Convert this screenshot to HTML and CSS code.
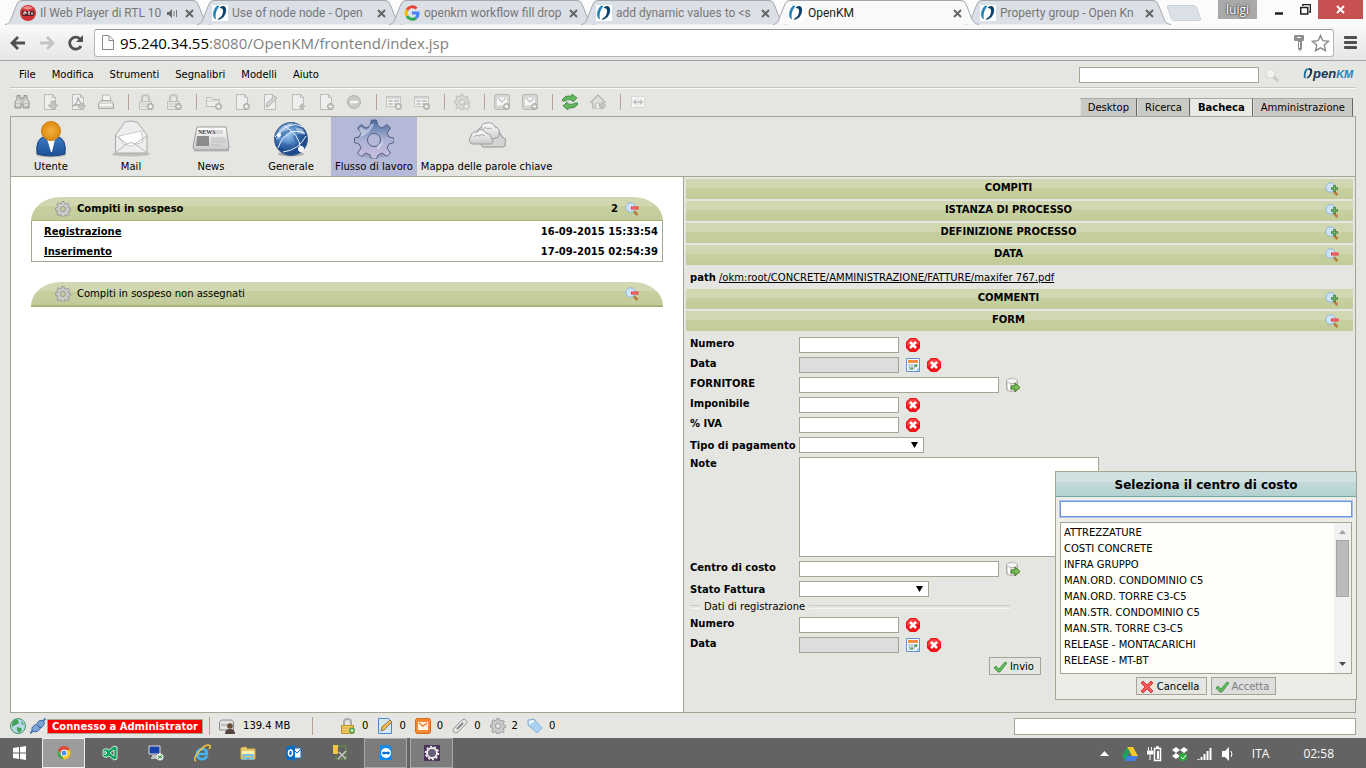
FILE: index.html
```html
<!DOCTYPE html>
<html lang="it">
<head>
<meta charset="utf-8">
<title>OpenKM</title>
<link rel="stylesheet" href="styles.css">
</head>
<body>
<svg class="defs" aria-hidden="true">
  <defs>
    <linearGradient id="g-person" x2="0" y2="1"><stop offset="0" stop-color="#3d7cc4"/><stop offset="1" stop-color="#1d4f94"/></linearGradient>
    <radialGradient id="g-head"><stop offset="0" stop-color="#f3b040"/><stop offset="1" stop-color="#dd8b12"/></radialGradient>
    <linearGradient id="g-grey" x2="0" y2="1"><stop offset="0" stop-color="#fff"/><stop offset="1" stop-color="#c9c9c9"/></linearGradient>
    <radialGradient id="g-world" cx=".4" cy=".35"><stop offset="0" stop-color="#a9cdf0"/><stop offset=".6" stop-color="#4f86c6"/><stop offset="1" stop-color="#1e4a8c"/></radialGradient>
    <linearGradient id="g-gear" x2="0" y2="1"><stop offset="0" stop-color="#4b6aa0"/><stop offset=".5" stop-color="#a9b2d4"/><stop offset="1" stop-color="#cdbfe0"/></linearGradient>
    <symbol id="tab" viewBox="0 0 206 25" preserveAspectRatio="none"><path d="M0 24.500C4 24 5 22 6 19L12 4Q13 .5 17 .5H188Q192 .5 193 4L199 19C200 22 202 24 206 24.500" stroke="#a4a8ad"/></symbol>
    <symbol id="okm" viewBox="0 0 16 16"><path d="M6 .5C2 2 0 9 2 13l2 1.500C3 10 4 5 7.500 1z" fill="#1d86b8"/><path d="M9 1.500c5-2 6 3 4.500 7-1.500 4-4 6-8 6.500L7 13c2.500-1 3.500-3 4-6 .3-2 0-4-3.500-4z" fill="#0d426b"/></symbol>
    <symbol id="rtl" viewBox="0 0 16 16"><circle cx="8" cy="8" r="8" fill="#cf3237"/><path d="M2 3q6-4 11 0L8 5z" fill="#ed898a"/><rect x="2" y="6" width="12" height="5" rx="1" fill="#542527"/><path d="M4 10V7h2v2M9 7v3M8 7h2M12 7v3" stroke="#fff" fill="none"/></symbol>
    <symbol id="google" viewBox="0 0 16 16"><g fill="none" stroke-width="3"><path d="M12.500 3.500A6 6 0 0 0 3 5" stroke="#ea4335"/><path d="M3 5a6 6 0 0 0 0 6" stroke="#fbbc05"/><path d="M3 11a6 6 0 0 0 9 2" stroke="#34a853"/><path d="M12 13a6 6 0 0 0 2-5H8" stroke="#4285f4"/></g></symbol>
    <symbol id="close" viewBox="0 0 9 9"><path d="M1 1l7 7M8 1L1 8" stroke="#666" stroke-width="2"/></symbol>
    <symbol id="gear" viewBox="0 0 16 16"><path d="M7 .5h2l.5 2 1.500.7 2-1 1.300 1.500-1 1.800.5 1.500 2 .5v2l-2 .5-.6 1.500 1.100 2-1.500 1.300-1.800-1-1.500.6-.5 1.600H7l-.5-1.600-1.500-.6-2 1L1.700 13l1-1.900L2.100 9.500.3 9V7l1.900-.5L2.800 5l-1-2 1.500-1.300 1.800 1L6.500 2.200zM8 5.500a2.500 2.500 0 1 0 0 5 2.500 2.500 0 1 0 0-5z" fill="#cacaca" stroke="#8c8c8c" stroke-width=".8" fill-rule="evenodd"/></symbol>
    <symbol id="bigear" viewBox="0 0 40 40"><ellipse cx="20" cy="35" rx="15" ry="4" fill="#888cab" opacity=".5"/><path d="M17.500 1h5l1.500 6 4 2 5-3.500 3.500 3.500-3.500 5 2 4 5 1v4.500l-5 1.500-2 4 3.500 5-3.500 3.500-5-3.500-4 2-1.500 4h-5L16 36l-4-2-5 3.500L3.500 34 7 29l-2-4-4.500-1.500V19L5 18l2-4-3.500-5L7 5.500 12 9l4-2zM20 14.500a6.500 6.500 0 1 0 0 13 6.500 6.500 0 1 0 0-13z" fill="url(#g-gear)" stroke="#55607f" fill-rule="evenodd"/><path d="M6 18l1-3-2-5 2-2 5 3 3-2 2-4h3q-3 9-14 13zM29 18q1 9-6 13l1-5q5-2 5-8z" fill="#e4e9f5" opacity=".55"/></symbol>
    <symbol id="lens-plus" viewBox="0 0 14 14"><circle cx="5.500" cy="5.500" r="4.700" fill="#cfe3f8" stroke="#8fb4e0"/><path d="M9 9.500l3.500 3.500" stroke="#b97b3c" stroke-width="2.500"/><path d="M6 6.500h7M9.500 3v7" stroke="#3f853b" stroke-width="2.600"/><path d="M7 6.500h5M9.500 4v5" stroke="#76b26b"/></symbol>
    <symbol id="lens-minus" viewBox="0 0 14 14"><circle cx="5.500" cy="5.500" r="4.700" fill="#cfe3f8" stroke="#8fb4e0"/><path d="M9 9.500l3.500 3.500" stroke="#b97b3c" stroke-width="2.500"/><path d="M6 6h7.500" stroke="#e3343c" stroke-width="3"/><path d="M7 6h5.500" stroke="#ff8b86"/></symbol>
    <symbol id="delete" viewBox="0 0 14 14"><path d="M4 0h6l4 4v6l-4 4H4l-4-4V4z" fill="#f01218"/><path d="M4.500 1h5L13 4.500v2Q7 5 1 8V4.500z" fill="#ff6060" opacity=".6"/><path d="M4 4l6 6M10 4l-6 6" stroke="#fff" stroke-width="2.600"/></symbol>
    <symbol id="calendar" viewBox="0 0 14 14"><path d="M.5.500h13v13H.5z" fill="#fff" stroke="#5e91d0"/><path d="M2 2h10v3H2z" fill="#f38b47"/><path d="M2 7h10M2 9h8M2 11h6M3.500 6v6M6 6v6M8.500 6v5M11 6v3" stroke="#a9bfe0"/><path d="M8.500 6.500h2.500V9H8.500zM4.500 9.500h2.500v2H4.500z" fill="#50a24c"/><path d="M13 9v4H9z" fill="#bcd1ee"/></symbol>
    <symbol id="database" viewBox="0 0 14 14"><path d="M.5 3v8c0 3 11 3 11 0V3z" fill="#d9d9d9" stroke="#aaa"/><ellipse cx="6" cy="3" rx="5.500" ry="2.500" fill="#f7f7f7" stroke="#b4b4b4"/><path d="M2 5v7h2V6z" fill="#fff"/><path d="M5 8h4V5l5 4.500L9 14v-3H5z" fill="#7fbd5a" stroke="#36801d"/></symbol>
    <symbol id="check" viewBox="0 0 14 12"><path d="M1 7l2-2 3 3L12 1l2 1-7 9H5z" fill="#63bd60" stroke="#37883a" stroke-width=".8"/></symbol>
    <symbol id="cross" viewBox="0 0 14 14"><path d="M1 3l2-2 4 4 4-4 2 2-4 4 4 4-2 2-4-4-4 4-2-2 4-4z" fill="#fa5c5c" stroke="#d83b3f"/></symbol>
    <symbol id="t-find" viewBox="0 0 16 16"><path d="M3 1.500h3V4h4V1.500h3V5l2 3v6H9v-4H7v4H1V8l2-3z" fill="#c4c4c2" stroke="#969694"/><path d="M2 8h4M10 8h4M2 11h4M10 11h4M4 5v2M12 5v2" stroke="#eee"/></symbol>
    <symbol id="page" viewBox="0 0 16 16"><path d="M2.500.500h8l3 3v12h-11z" fill="#eeeeec" stroke="#bcbcba"/><path d="M10.500.500v3h3" fill="none" stroke="#bcbcba"/></symbol>
    <symbol id="t-down" viewBox="0 0 16 16"><use href="#page"/><path d="M9 7h4v4h3l-5 5-5-5h3z" fill="#c6c6c4" stroke="#aaaaa8" stroke-width=".7"/></symbol>
    <symbol id="t-pdf" viewBox="0 0 16 16"><use href="#page"/><path d="M3 12q5-3 5-9 1 6 6 8-6-1-11 1" fill="none" stroke="#aaa" stroke-width="1.200"/><path d="M10 9h3v3h3l-4.500 4L7 12h3z" fill="#c6c6c4" stroke="#aaaaa8" stroke-width=".5"/></symbol>
    <symbol id="t-print" viewBox="0 0 16 16"><path d="M4.500 7V1h6l2 2v4" fill="#f4f4f2" stroke="#b5b5b3"/><path d="M3 6.500h10l2.500 3v5H.5v-5z" fill="#d9d9d7" stroke="#a9a9a7"/><path d="M2 11h12" stroke="#f6f6f4" stroke-width="2"/></symbol>
    <symbol id="t-lock" viewBox="0 0 16 16"><path d="M4 8V4q0-3 3.500-3T11 4v4" fill="none" stroke="#c4c4c2" stroke-width="2"/><path d="M1.500 7.500h12v8h-12z" fill="#e4e4e2" stroke="#c0c0be"/><path d="M3 10h9M3 12.500h7" stroke="#ccccca"/></symbol>
    <symbol id="badge-plus" viewBox="0 0 16 16"><circle cx="12.500" cy="12.500" r="3" fill="#c9c9c7" stroke="#a5a5a3"/><path d="M11 12.500h3M12.500 11v3" stroke="#fff"/></symbol>
    <symbol id="badge-minus" viewBox="0 0 16 16"><circle cx="12.500" cy="12.500" r="3" fill="#c9c9c7" stroke="#a5a5a3"/><path d="M11 12.500h3" stroke="#fff"/></symbol>
    <symbol id="t-folder" viewBox="0 0 16 16"><path d="M.5 3.500h5l1 2h7v7H.5z" fill="#ececea" stroke="#bcbcba"/><path d="M1 7h12" stroke="#ccc"/></symbol>
    <symbol id="t-edit" viewBox="0 0 16 16"><use href="#page"/><path d="M4 13l1-4 8-7 2 2-8 8z" fill="#d1d1cf" stroke="#b4b4b2"/></symbol>
    <symbol id="t-up" viewBox="0 0 16 16"><use href="#page"/><path d="M12 9l4 4h-2v3h-4v-3H8z" fill="#bdbdbb"/></symbol>
    <symbol id="t-stop" viewBox="0 0 16 16"><circle cx="8" cy="8" r="6.500" fill="#c9c9c7" stroke="#b1b1af"/><path d="M4 8h8" stroke="#f5f5f3" stroke-width="2.500"/></symbol>
    <symbol id="t-form" viewBox="0 0 16 16"><path d="M.5 2.500h14v10H.5z" fill="#f1f1ef" stroke="#c4c4c2"/><path d="M1 4h13" stroke="#bbb"/><path d="M2.500 7h4M8 7h5M2.500 10h4M8 10h3" stroke="#bbb" stroke-width="1.500"/></symbol>
    <symbol id="t-mail" viewBox="0 0 16 16"><rect x=".5" y=".5" width="15" height="15" rx="2" fill="#d4d4d2" stroke="#b9b9b7"/><path d="M3 3.500h10v8H3z" fill="#f7f7f5"/><path d="M4 4l4 4 4-4" fill="none" stroke="#c4c4c2" stroke-width="1.500"/></symbol>
    <symbol id="t-refresh" viewBox="0 0 16 16"><path d="M0 6q3-5 8-4h2V0l5 4-4 4-1-2q-5-1-7 1H0z" fill="#66b763" stroke="#348a39" stroke-width=".8"/><path d="M16 10q-3 5-8 4H6v2l-5-4 4-4 1 2q5 1 7-1h3z" fill="#66b763" stroke="#348a39" stroke-width=".8"/></symbol>
    <symbol id="t-home" viewBox="0 0 16 16"><path d="M1 8l7-7 7 7-2 1v5H3V9z" fill="#dededc" stroke="#b0b0ae" stroke-width="1.200"/><path d="M6 14V9h4v5" fill="#f7f7f5" stroke="#bbb"/><path d="M9 10h3V8l4 3.500-4 3.500v-2H9z" fill="#c6c6c4" stroke="#aaa" stroke-width=".6"/></symbol>
    <symbol id="t-split" viewBox="0 0 16 16"><path d="M1.500 2.500h13v11h-13z" fill="#f5f5f3" stroke="#d8d8d6"/><path d="M2.500 8L6 5v2h4V5l3.500 3-3.500 3V9H6v2z" fill="#c2c2c0"/><path d="M8 3v10" stroke="#ddd"/></symbol>
    <symbol id="globe" viewBox="0 0 16 16"><circle cx="8" cy="8" r="7.500" fill="#b7d6ea" stroke="#40955b"/><path d="M3 3q4-3 5-1l1 3-3 2-3 1-1 2V6zM7 9l4 1 1 2-3 3-2-3zM11 3l3 3-2 1z" fill="#42a556"/></symbol>
  </defs>
</svg>

<header class="browser">
  <div class="strip">
    <div class="btab"><svg class="shape"><use href="#tab"/></svg><svg class="i16"><use href="#rtl"/></svg><span class="btitle">Il Web Player di RTL 10</span><svg class="speaker" viewBox="0 0 12 9"><path d="M0 3h2l3-3v9L2 6H0z" fill="#666"/><path d="M7 2v5M9.500 1v7" stroke="#777"/></svg><button class="x" aria-label="Chiudi scheda"><svg><use href="#close"/></svg></button></div>
    <div class="btab"><svg class="shape"><use href="#tab"/></svg><svg class="i16 white"><use href="#okm"/></svg><span class="btitle">Use of node node - Open</span><button class="x" aria-label="Chiudi scheda"><svg><use href="#close"/></svg></button></div>
    <div class="btab"><svg class="shape"><use href="#tab"/></svg><svg class="i16"><use href="#google"/></svg><span class="btitle">openkm workflow fill drop</span><button class="x" aria-label="Chiudi scheda"><svg><use href="#close"/></svg></button></div>
    <div class="btab"><svg class="shape"><use href="#tab"/></svg><svg class="i16 white"><use href="#okm"/></svg><span class="btitle">add dynamic values to &lt;s</span><button class="x" aria-label="Chiudi scheda"><svg><use href="#close"/></svg></button></div>
    <div class="btab current"><svg class="shape"><use href="#tab"/></svg><svg class="i16 white"><use href="#okm"/></svg><span class="btitle">OpenKM</span><button class="x" aria-label="Chiudi scheda"><svg><use href="#close"/></svg></button></div>
    <div class="btab"><svg class="shape"><use href="#tab"/></svg><svg class="i16 white"><use href="#okm"/></svg><span class="btitle">Property group - Open Kn</span><button class="x" aria-label="Chiudi scheda"><svg><use href="#close"/></svg></button></div>
    <button class="newtab" aria-label="Nuova scheda"></button>
    <div class="winctl">
      <span class="user">luigi</span>
      <button aria-label="Riduci"><svg width="10" height="12"><path d="M1 9.500h8" stroke="#222" stroke-width="2.500"/></svg></button>
      <button aria-label="Ripristina"><svg width="11" height="11"><path d="M3 2V.5h7.500V8H9M.75 3.500h7V10h-7z" fill="none" stroke="#222" stroke-width="1.500"/></svg></button>
      <button class="kill" aria-label="Chiudi"><svg width="9" height="9"><path d="M1 1l7 7M8 1L1 8" stroke="#fff" stroke-width="2"/></svg></button>
    </div>
  </div>
  <div class="nav">
    <button aria-label="Indietro"><svg width="16" height="14"><path d="M15 7H2M8 1L2 7l6 6" fill="none" stroke="#505050" stroke-width="2.800"/></svg></button>
    <button aria-label="Avanti"><svg width="16" height="14"><path d="M1 7h13M8 1l6 6-6 6" fill="none" stroke="#c4c4c4" stroke-width="2.800"/></svg></button>
    <button aria-label="Ricarica"><svg width="16" height="16"><path d="M13 11a6 6 0 1 1-1-7" fill="none" stroke="#505050" stroke-width="2.800"/><path d="M15 0v7H8z" fill="#505050"/></svg></button>
    <div class="omni">
      <svg width="12" height="15"><path d="M1 .5h6L11.500 5v9.500H.5V.5zM7 1v4.500h4" fill="#fff" stroke="#888"/></svg>
      <span class="url"><b>95.240.34.55</b>:8080/OpenKM/frontend/index.jsp</span>
      <svg width="11" height="16"><path d="M1 0h8q1 0 1 1v4q0 1-1 1H8v8l-2 2-2-2V6H1Q0 6 0 5V1z" fill="#8d8d8d"/><path d="M3 2.500h4M5.500 7v6" stroke="#fff"/></svg>
      <svg width="19" height="18"><path d="M9.500 1.500l2.400 5.200 5.600.6-4.200 3.800 1.200 5.600-5-2.900-5 2.900 1.200-5.600L1.500 7.300l5.600-.6z" fill="#fff" stroke="#8a8a8a" stroke-width="1.400"/></svg>
    </div>
    <button aria-label="Menu"><svg width="13" height="13"><path d="M1 1.500h11M1 6.500h11M1 11.500h11" stroke="#505050" stroke-width="2.800" stroke-linecap="round"/></svg></button>
  </div>
</header>

<main class="app">
  <div class="menubar">
    <nav><a href="#">File</a><a href="#">Modifica</a><a href="#">Strumenti</a><a href="#">Segnalibri</a><a href="#">Modelli</a><a href="#">Aiuto</a></nav>
    <input class="field quick" type="text" aria-label="Ricerca rapida">
    <svg class="glass" width="14" height="14"><path d="M8 8l5 5" stroke="#c7c7c5" stroke-width="3"/><circle cx="5.500" cy="5.500" r="4.500" fill="#f2f2f0" stroke="#d4d4d2"/></svg>
    <div class="logo"><svg width="10" height="13" viewBox="0 0 11 13"><path d="M4 1Q0 4 1 11l2 1Q2 5 6 1z" fill="#1c6f9d"/><path d="M6 1q5-1 4 4-1 5-5 7l-1-1q4-3 4-7 0-2-3-2z" fill="#0e3251"/></svg><span>pen<i>KM</i></span></div>
  </div>

  <div class="toolrow">
    <div class="tools">
      <div class="tgroup"><svg class="i16"><use href="#t-find"/></svg><svg class="i16"><use href="#t-down"/></svg><svg class="i16"><use href="#t-pdf"/></svg><svg class="i16"><use href="#t-print"/></svg></div>
      <div class="tgroup"><svg class="i16"><use href="#t-lock"/><use href="#badge-plus"/></svg><svg class="i16"><use href="#t-lock"/><use href="#badge-minus"/></svg></div>
      <div class="tgroup"><svg class="i16"><use href="#t-folder"/><use href="#badge-plus"/></svg><svg class="i16"><use href="#page"/><use href="#badge-plus"/></svg><svg class="i16"><use href="#t-edit"/></svg><svg class="i16"><use href="#t-up"/></svg><svg class="i16"><use href="#page"/><use href="#badge-minus"/></svg><svg class="i16"><use href="#t-stop"/></svg></div>
      <div class="tgroup"><svg class="i16"><use href="#t-form"/><use href="#badge-plus"/></svg><svg class="i16"><use href="#t-form"/><use href="#badge-minus"/></svg></div>
      <div class="tgroup"><svg class="i16 pale"><use href="#gear"/><use href="#badge-plus"/></svg></div>
      <div class="tgroup"><svg class="i16"><use href="#t-mail"/><use href="#badge-plus"/></svg><svg class="i16"><use href="#t-mail"/><use href="#badge-minus"/></svg></div>
      <div class="tgroup"><svg class="i16"><use href="#t-refresh"/></svg><svg class="i16"><use href="#t-home"/></svg></div>
      <div class="tgroup"><svg class="i16"><use href="#t-split"/></svg></div>
    </div>
    <nav class="views"><a href="#">Desktop</a><a href="#">Ricerca</a><a href="#" class="on">Bacheca</a><a href="#">Amministrazione</a></nav>
  </div>

  <div class="frame">
    <nav class="boards">
      <a href="#"><svg width="40" height="40" viewBox="0 0 40 40"><ellipse cx="20" cy="36" rx="15" ry="2.500" fill="#999" opacity=".5"/><path d="M6 35q-2-16 9-18h10q11 2 9 18-14 4-28 0z" fill="url(#g-person)" stroke="#18427c"/><path d="M16 20h8l-3 13h-1z" fill="#fff"/><circle cx="20" cy="12" r="9.500" fill="url(#g-head)" stroke="#c97d11"/></svg>Utente</a>
      <a href="#"><svg width="40" height="40" viewBox="0 0 40 40"><ellipse cx="20" cy="35" rx="19" ry="2.500" fill="#999" opacity=".5"/><path d="M4.500 34V16L14 3q6-2 12 0l10 13v18z" fill="#eee" stroke="#aaa"/><path d="M8 17l22-5 2 11-12 4-8-2z" fill="#fff" stroke="#ccc"/><path d="M5 33l11-8q4-3 8 0l11 8M5 17l11 8M36 17l-12 8" fill="none" stroke="#bbb"/></svg>Mail</a>
      <a href="#"><svg width="40" height="40" viewBox="0 0 40 40"><path d="M3 31h35" stroke="#999" stroke-width="3" opacity=".5"/><path d="M6 8h29l3 20q0 3-3 3H5q-3 0-3-3z" fill="url(#g-grey)" stroke="#999"/><text x="7" y="15" class="news">NEWS</text><path d="M24 12h8M24 14h8M20 19h14M20 21h15M20 23h15M20 26h10" stroke="#bbb"/><path d="M6 17h12v10H5z" fill="#8b8b8b"/></svg>News</a>
      <a href="#"><svg width="40" height="40" viewBox="0 0 40 40"><ellipse cx="20" cy="35" rx="13" ry="2.500" fill="#888" opacity=".6"/><circle cx="20" cy="20" r="16.500" fill="url(#g-world)" stroke="#41648f"/><path d="M8 11l7-6 5 2-2 7-6 4-5 1zM22 17l9-3 4 5-5 4-6-1zM12 24l9 2 1 6-6 2-6-5z" fill="#285894" opacity=".5"/><path d="M8 11q6-7 14-7l-5 7-6 2-2 6-4 2zM24 8l8 2 2 6-7-2z" fill="#d4e6f8" opacity=".6"/><path d="M4 18Q18 0 32 8M7 29Q15 7 34 14M12 33Q28 31 35 17M13 7q15 7 17 24" fill="none" stroke="#e9f4ff"/><circle cx="30" cy="30" r="3" fill="#fff"/><circle cx="8" cy="16" r="2" fill="#fff"/></svg>Generale</a>
      <a href="#" class="on"><svg width="40" height="40"><use href="#bigear"/></svg>Flusso di lavoro</a>
      <a href="#"><svg width="40" height="40" viewBox="0 0 40 40"><path d="M16 28q-5-4-1-8 1-5 6-4 2-6 8-4 5 1 6 6 5 1 3 6 1 4-2 4z" fill="#d4d4d2" stroke="#929292"/><path d="M10 16q-1-6 4-7 1-5 6-5 6-1 8 4 5 1 4 6 1 4-3 5l-6 2H13z" fill="url(#g-grey)" stroke="#999"/><path d="M5 25q-5-3-1-8 1-5 6-4 5-5 9 1 5 1 5 5 4 4 0 6z" fill="url(#g-grey)" stroke="#999"/><path d="M7 18q2-3 5-1 3-3 6 0M15 10q3-3 6 0 2-2 4 0" fill="none" stroke="#aaa"/></svg>Mappa delle parole chiave</a>
    </nav>
    <div class="split">
      <section class="left">
        <div class="card">
          <h2 class="cap strong"><svg class="i16"><use href="#gear"/></svg><span>Compiti in sospeso</span><em>2</em><svg class="i14"><use href="#lens-minus"/></svg></h2>
          <table class="tasks"><tbody>
            <tr><td><a href="#">Registrazione</a></td><td>16-09-2015 15:33:54</td></tr>
            <tr><td><a href="#">Inserimento</a></td><td>17-09-2015 02:54:39</td></tr>
          </tbody></table>
        </div>
        <div class="card">
          <h2 class="cap"><svg class="i16"><use href="#gear"/></svg><span>Compiti in sospeso non assegnati</span><svg class="i14"><use href="#lens-minus"/></svg></h2>
        </div>
      </section>
      <section class="right">
        <h3 class="bar">COMPITI<svg class="i14"><use href="#lens-plus"/></svg></h3>
        <h3 class="bar">ISTANZA DI PROCESSO<svg class="i14"><use href="#lens-plus"/></svg></h3>
        <h3 class="bar">DEFINIZIONE PROCESSO<svg class="i14"><use href="#lens-plus"/></svg></h3>
        <h3 class="bar">DATA<svg class="i14"><use href="#lens-minus"/></svg></h3>
        <p class="path"><b>path</b> <a href="#">/okm:root/CONCRETE/AMMINISTRAZIONE/FATTURE/maxifer 767.pdf</a></p>
        <h3 class="bar">COMMENTI<svg class="i14"><use href="#lens-plus"/></svg></h3>
        <h3 class="bar">FORM<svg class="i14"><use href="#lens-minus"/></svg></h3>
        <form class="form">
          <label for="f1">Numero</label><div><input id="f1" class="field short" type="text"><svg class="i14"><use href="#delete"/></svg></div>
          <label for="f2">Data</label><div><input id="f2" class="field short" type="text" disabled><svg class="i14"><use href="#calendar"/></svg><svg class="i14"><use href="#delete"/></svg></div>
          <label for="f3">FORNITORE</label><div><input id="f3" class="field long" type="text"><svg class="i14"><use href="#database"/></svg></div>
          <label for="f4">Imponibile</label><div><input id="f4" class="field short" type="text"><svg class="i14"><use href="#delete"/></svg></div>
          <label for="f5">% IVA</label><div><input id="f5" class="field short" type="text"><svg class="i14"><use href="#delete"/></svg></div>
          <label for="f6" class="low">Tipo di pagamento</label><div><select id="f6" class="field pay"><option></option></select></div>
          <label for="f7">Note</label><div><textarea id="f7" class="field"></textarea></div>
          <label for="f8">Centro di costo</label><div><input id="f8" class="field long" type="text"><svg class="i14"><use href="#database"/></svg></div>
          <label for="f9" class="low">Stato Fattura</label><div><select id="f9" class="field state"><option></option></select></div>
          <div class="rule"><span>Dati di registrazione</span></div>
          <label for="f10">Numero</label><div><input id="f10" class="field short" type="text"><svg class="i14"><use href="#delete"/></svg></div>
          <label for="f11">Data</label><div><input id="f11" class="field short" type="text" disabled><svg class="i14"><use href="#calendar"/></svg><svg class="i14"><use href="#delete"/></svg></div>
          <div class="send"><button type="button" class="btn"><svg class="i14"><use href="#check"/></svg>Invio</button></div>
        </form>
      </section>
    </div>
  </div>

  <footer class="status">
    <svg class="i16"><use href="#globe"/></svg>
    <svg class="i16"><path d="M0 15.500l4-4M11 5l4.500-4.500" stroke="#4d7cb6" stroke-width="2"/><path d="M2.500 9L6 6l4.500 4.500L7 13.500q-3 1-4.500-.5t0-4zM7 5l2-2q4-1.500 5 .5t-1 4.500l-2 2z" fill="#7fa6d8" stroke="#3b68a4"/></svg>
    <strong class="conn">Connesso a Administrator</strong>
    <div class="sgroup mem"><svg class="i16"><path d="M.5 4l2-2h10l2 2v8H.5z" fill="#e2e2e2" stroke="#8c8c8c"/><path d="M2 7h8" stroke="#999"/><circle cx="11" cy="8" r="2.800" fill="#6e4a32"/><path d="M6 16q0-5 5-5t5 5z" fill="#544740"/></svg>139.4 MB</div>
    <div class="sgroup counts">
      <span><svg class="i16"><path d="M4 8V4q0-3 3.500-3T11 4v4" fill="none" stroke="#aaa" stroke-width="2"/><path d="M1.500 7.500h12v8h-12z" fill="#f2cb63" stroke="#bd8e2a"/><path d="M2 10h11M2 13h9" stroke="#d8a844"/><circle cx="12" cy="12.500" r="3" fill="#4ca64b"/><path d="M10.500 12.500h3M12 11v3" stroke="#fff"/></svg>0</span>
      <span><svg class="i16"><path d="M1.500.500h10l3 3v12h-13z" fill="#d3e6fc" stroke="#4a86d0"/><path d="M4 13l1-4 8-7 2 2-8 8z" fill="#f2b94f" stroke="#8a7a50"/></svg>0</span>
      <span><svg class="i16"><rect x=".5" y=".5" width="15" height="15" rx="2" fill="#f08a36" stroke="#d96814"/><path d="M3 4h10v8H3z" fill="#fff3e5"/><path d="M4 5l4 3 4-3" fill="none" stroke="#ee8630" stroke-width="1.500"/></svg>0</span>
      <span><svg class="i16"><path d="M2 10l8-8q3-2 4.500.5T14 6l-8 8q-3 2-4.500 0T2 10z" fill="#e4e4e4" stroke="#999"/><path d="M5 11l6-6" stroke="#888" stroke-width="2"/></svg>0</span>
      <span><svg class="i16"><use href="#gear"/></svg>2</span>
      <span><svg class="i16"><path d="M1 2l6-1 8 9-5 5-9-8z" fill="#a9d2f2" stroke="#88afd4"/><path d="M2 3l4.500-1 1 1L3 6.500 2 6z" fill="#f3f9ff"/></svg>0</span>
    </div>
    <input class="field msg" type="text" aria-label="Messaggi">
  </footer>

  <div class="dialog" role="dialog" aria-labelledby="dlg">
    <h2 id="dlg">Seleziona il centro di costo</h2>
    <div class="dbody">
      <input class="field filter" type="text" aria-label="Filtro">
      <div class="listbox">
        <select size="9" aria-label="Centro di costo">
          <option>ATTREZZATURE</option><option>COSTI CONCRETE</option><option>INFRA GRUPPO</option><option>MAN.ORD. CONDOMINIO C5</option><option>MAN.ORD. TORRE C3-C5</option><option>MAN.STR. CONDOMINIO C5</option><option>MAN.STR. TORRE C3-C5</option><option>RELEASE - MONTACARICHI</option><option>RELEASE - MT-BT</option>
        </select>
        <div class="scroll"><svg width="7" height="4"><path d="M0 4l3.500-4L7 4z" fill="#a3a3a3"/></svg><i></i><svg width="7" height="4"><path d="M0 0h7L3.500 4z" fill="#505050"/></svg></div>
      </div>
      <div class="dbtns"><button class="btn"><svg class="i14"><use href="#cross"/></svg>Cancella</button><button class="btn" disabled><svg class="i14"><use href="#check"/></svg>Accetta</button></div>
    </div>
  </div>
</main>

<footer class="taskbar">
  <button class="start" aria-label="Start"><svg width="14" height="14"><path d="M0 2l6-1v5.500H0zM7 1l6-1v6.500H7zM0 7.500h6V13l-6-1zM7 7.500h6V14l-6-1z" fill="#fff"/></svg></button>
  <button class="front" aria-label="Chrome"><svg width="16" height="16" viewBox="0 0 16 16"><circle cx="8" cy="8" r="6.500" fill="#f6c926"/><path d="M2 5a6.500 6.500 0 0 1 12 0H8L5 9z" fill="#dd4b3e"/><path d="M2 5l4 6 2 3.500A6.500 6.500 0 0 1 2 5z" fill="#3fa757"/><circle cx="8" cy="8" r="3" fill="#4a8bee" stroke="#fff"/></svg></button>
  <button aria-label="Visual Studio"><svg width="16" height="16"><path d="M1 5q3-3 6 0l5-4 3 1v12l-3 1-5-4q-3 3-6 0zM3 6v4l2-2zM12 5L8 8l4 3z" fill="#07a45b" stroke="#fff" stroke-width=".8" fill-rule="evenodd"/></svg></button>
  <button aria-label="Desktop remoto"><svg width="16" height="16"><path d="M1 1h11v8H1z" fill="#1742ad" stroke="#ddd"/><path d="M4 11h6M3 13h7" stroke="#ddd" stroke-width="1.500"/><circle cx="12" cy="12" r="3.500" fill="#e5eee5"/><path d="M10 11l2 1-2 2M14 10l-2 2 2 1" stroke="#2e8a32" fill="none"/></svg></button>
  <button aria-label="Internet Explorer"><svg width="18" height="18"><path d="M14 12q-2 4-6 3-4-1-4-5t5-5q5 0 5 5H5" fill="none" stroke="#45b6ee" stroke-width="2.600"/><path d="M3 17q-3-1 1-7Q11 1 15 1t1 4" fill="none" stroke="#f5c53e" stroke-width="1.500"/></svg></button>
  <button aria-label="Esplora file"><svg width="16" height="16"><path d="M1 3l5-1 1 2h8v10H1z" fill="#e9ca6c" stroke="#d8b44a"/><path d="M2 6h12v4H2z" fill="#fff1b5"/><path d="M3.500 15V10h9v5M6 15v-2h4v2" fill="none" stroke="#79c0e4" stroke-width="2"/></svg></button>
  <button aria-label="Outlook"><svg width="16" height="16"><path d="M8 3h7v10H8z" fill="#fff" stroke="#1271c3"/><path d="M8 5l3 3 4-4" fill="none" stroke="#1271c3"/><path d="M0 2l9-2v16l-9-2z" fill="#0b6cc4"/><ellipse cx="4.500" cy="8" rx="2" ry="3" fill="none" stroke="#fff" stroke-width="1.500"/></svg></button>
  <button aria-label="SQL Tools"><svg width="16" height="16"><path d="M6 1h8v13H4v-3" fill="none" stroke="#61b33d" stroke-dasharray="2 1"/><path d="M1 0h5v9H1z" fill="#f1c34b"/><path d="M6 14l8-8M7 7l7 7" stroke="#c7c7c7" stroke-width="1.500"/></svg></button>
  <button class="open" aria-label="TeamViewer"><svg width="14" height="16"><path d="M1 0h9l3 3v12H1z" fill="#128bec"/><circle cx="7" cy="8" r="5" fill="#fff"/><path d="M2.500 8l3-2v1h3V6l3 2-3 2V9h-3v1z" fill="#086ed0"/></svg></button>
  <button class="open" aria-label="Servizio"><svg width="16" height="16"><path d="M0 0h16v16H0z" fill="#4b345c"/><circle cx="8" cy="8" r="5" fill="#665d78" stroke="#eee" stroke-width="2"/><circle cx="8" cy="8" r="6.500" fill="none" stroke="#eee" stroke-width="1.500" stroke-dasharray="2 2"/></svg></button>
  <div class="tray">
    <svg width="9" height="6"><path d="M0 5l4.500-5L9 5z" fill="#fff"/></svg>
    <svg width="16" height="14"><path d="M5 0h6l5 9h-6z" fill="#f9c928"/><path d="M5 0l3 5-5 9-3-5z" fill="#1ca25c"/><path d="M5 9h11l-3 5H3z" fill="#437feb"/></svg>
    <svg width="16" height="16"><path d="M7.500 2.500h6v12h-6zM9 1h3" fill="none" stroke="#fff" stroke-width="1.500"/><path d="M10 5h2v8h-2z" fill="#fff"/><path d="M1.500 1v3M4.500 1v3M0 5h6v3H0zM3 8v6" fill="#fff" stroke="#fff"/></svg>
    <svg width="16" height="16"><path d="M4 1l4 3-4 3-4-3zM12 1l4 3-4 3-4-3zM4 7l4 3-4 3-4-3zM12 7l3 3-4 3-3-3z" fill="#fff"/><circle cx="11" cy="11" r="4" fill="#2aab3b"/><path d="M9 11l2 2 3-4" stroke="#fff" fill="none"/></svg>
    <svg width="16" height="14"><path d="M1.500 12v1M4.500 10v3M7.500 7v6M10.500 4v9M13.500 1v12" stroke="#fff" stroke-width="2"/></svg>
    <svg width="13" height="14"><path d="M0 4h3l4-4v14l-4-4H0z" fill="#fff"/><path d="M9 4q2 3 0 6" stroke="#fff" fill="none"/></svg>
    <span>ITA</span><time>02:58</time>
  </div>
</footer>
</body>
</html>
```
FILE: styles.css
```css
* { box-sizing: border-box; }
body {
  margin: 0;
  min-height: 100vh;
  display: flex;
  flex-direction: column;
  font: 10px/16px "DejaVu Sans", Verdana, sans-serif;
  color: #000;
  background: #e5e6e1;
}
h2, h3, p { margin: 0; font-size: inherit; font-weight: normal; }
a { color: inherit; text-decoration: none; }
button { font: inherit; color: inherit; border: 0; padding: 0; margin: 0; background: none; }
svg { flex: none; display: block; }
.defs { width: 0; height: 0; position: absolute; }
.i16 { width: 16px; height: 16px; }
.i14 { width: 14px; height: 14px; }
.white { background: #fff; }
.pale { opacity: .5; }

/* browser window */
.browser { font: 12px/16px "Open Sans", "Noto Sans", sans-serif; background: #fbfbfb; }
.strip { display: flex; height: 25px; padding-left: 5px; }
.btab {
  position: relative;
  display: flex;
  align-items: center;
  gap: 4px;
  width: 206px;
  margin-right: -14px;
  padding: 1px 15px 0 15px;
  color: #777;
  font-family: Roboto, "Open Sans", sans-serif;
}
.btab svg { position: relative; }
.btab .shape { position: absolute; left: 0; top: 0; width: 100%; height: 25px; fill: #dbdfe6; }
.btab.current { z-index: 1; color: #222; }
.btab.current .shape { fill: #f9f9f9; }
.btitle { position: relative; flex: 1; white-space: nowrap; }
.speaker { width: 12px; height: 9px; }
.x { width: 13px; height: 16px; display: grid; place-items: center; }
.x svg { width: 9px; height: 9px; }
.newtab { width: 30px; height: 16px; margin: 5px 0 0 12px; border: 1px solid #ccd1d8; border-radius: 3px; background: #dbdfe6; transform: skewX(20deg); }
.winctl { display: flex; height: 19px; margin: 0 3px 0 auto; }
.winctl button { width: 26px; display: grid; place-items: center; }
.user { width: 39px; margin-right: 9px; line-height: 19px; text-align: center; background: #a9a9a9; color: #fff; text-shadow: 0 0 2px #333, 0 0 2px #333; }
.winctl .kill { width: 45px; background: #c75050; }
.nav {
  display: flex;
  align-items: center;
  gap: 13px;
  height: 36px;
  padding: 0 9px 0 10px;
  background: linear-gradient(#f9f9f9, #e6e6e6);
  border-bottom: 1px solid #a3a3a3;
}
.omni {
  flex: 1;
  display: flex;
  align-items: center;
  gap: 6px;
  height: 28px;
  margin-left: -3px;
  margin-right: -3px;
  padding: 0 3px 0 7px;
  background: #fff;
  border: 1px solid #b4b4b4;
  border-top-color: #999;
  border-radius: 3px;
}
.url { flex: 1; font-size: 15px; line-height: 22px; color: #808080; }
.url b { font-weight: normal; color: #000; }

/* application */
.app { position: relative; flex: 1; display: flex; flex-direction: column; padding: 0 10px; }
.menubar { display: flex; align-items: center; height: 28px; border-bottom: 1px solid #fafafa; box-shadow: inset 0 -1px #c6c7c2; }
.menubar nav { display: flex; gap: 16px; padding-left: 9px; flex: 1; }
.field {
  display: block;
  height: 16px;
  margin: 0;
  padding: 0 4px;
  border: 1px solid #a5a593;
  border-radius: 0;
  background: #fff;
  font: inherit;
  outline: 0;
}
.quick { width: 180px; }
.glass { margin: 0 24px 0 6px; }
.logo { display: flex; align-items: center; width: 53px; padding-bottom: 2px; font: italic bold 13px/16px "Liberation Sans", sans-serif; color: #123a5c; }
.logo i { color: #1787c0; font-size: 11px; }
.toolrow { display: flex; justify-content: space-between; align-items: flex-end; height: 27px; }
.tools { display: flex; gap: 14px; padding: 0 0 6px 4px; }
.tgroup { display: flex; gap: 12px; }
.tgroup + .tgroup { padding-left: 9px; border-left: 1px solid #b3a294; }
.views { display: flex; margin-right: 3px; }
.views a { padding: 1px 7px 0 8px; height: 18px; background: #c9cac6; border: solid #aaaba6; border-width: 1px 1px 0 0; border-right-color: #666; box-shadow: inset 1px 0 #ddd; }
.views .on { background: #e9eae6; font-weight: bold; }

.frame { flex: 1; display: flex; flex-direction: column; border: 1px solid #a5a593; }
.boards { display: flex; height: 60px; border-bottom: 1px solid #a5a593; }
.boards a { display: flex; flex-direction: column; align-items: center; min-width: 80px; padding: 2px 4px 0; white-space: nowrap; }
.boards .on { background: #b5b9d8; }
.news { font: bold 6px "Liberation Serif", serif; fill: #333; }
.split { flex: 1; display: grid; grid-template-columns: 1fr 1fr; }
.left { padding: 20px; background: #fff; }
.right { padding: 2px; border-left: 1px solid #a5a593; }
.card + .card { margin-top: 20px; }
.cap {
  display: flex;
  align-items: center;
  height: 25px;
  padding: 1px 24px 0;
  border-bottom: 2px solid #a9b373;
  border-radius: 30px 30px 0 0 / 24px 24px 0 0;
  background: linear-gradient(#d0d7b1 0 38%, #c7cf9f 40%, #c2cc9a);
}
.cap .i16 { margin-right: 6px; }
.cap span { flex: 1; }
.cap em { font-style: normal; margin-right: 7px; }
.strong { font-weight: bold; height: 24px; border-bottom-width: 1px; }
.tasks { width: 100%; border-collapse: separate; border-spacing: 0; border: 1px solid #a5a593; border-top: 0; font-weight: bold; }
.tasks td { height: 20px; padding: 2px 4px 0 12px; }
.tasks td + td { text-align: right; }
.tasks a, .path a { text-decoration: underline; }
.bar {
  display: flex;
  justify-content: center;
  align-items: center;
  position: relative;
  height: 20px;
  margin-bottom: 2px;
  padding-bottom: 3px;
  padding-right: 22px;
  background: linear-gradient(#d0d7b1 0 43%, #c7cf9f 45%, #c2cc9a);
  font-weight: bold;
}
.bar .i14 { position: absolute; right: 14px; top: 3px; }
.path { padding: 5px 4px 3px; margin-top: -2px; height: 24px; }
.form { display: grid; grid-template-columns: 105px 1fr; gap: 4px; padding: 4px 4px 0; }
.form label { font-weight: bold; line-height: 14px; white-space: nowrap; }
.form .low { align-self: end; }
.form > div { display: flex; align-items: center; gap: 7px; }
.short { width: 100px; }
.long { width: 200px; }
.pay { width: 125px; }
.state { width: 130px; }
.field:disabled { background: #ddd; }
select.field {
  appearance: none;
  background: #fff url("data:image/svg+xml,%3Csvg xmlns='http://www.w3.org/2000/svg' width='7' height='6'%3E%3Cpath d='M0 0h7L3.500 6z'/%3E%3C/svg%3E") no-repeat right 5px center;
}
textarea.field { width: 300px; height: 100px; resize: none; }
.form .rule { grid-column: 1 / -1; gap: 4px; width: 320px; height: 12px; }
.rule::before, .rule::after { content: ""; height: 2px; border-top: 1px solid #c9c9c5; border-bottom: 1px solid #f5f5f3; }
.rule::before { width: 10px; }
.rule::after { flex: 1; }
.form .send { grid-column: 1 / -1; width: 351px; justify-content: flex-end; }
.btn { display: flex; align-items: center; gap: 3px; height: 18px; padding: 1px 6px 0 3px; border: 1px solid #a5a593; background: #e5e6e1; }
.btn:disabled { background: #ddd; color: #808080; }

.status { display: flex; align-items: center; height: 25px; padding-top: 1px; }
.status > .i16:first-child { margin-right: 4px; }
.conn { margin: 0 6px 0 1px; padding: 0 4px; line-height: 13px; border: 1px solid #a5a593; background: #f00; color: #fff; }
.sgroup { display: flex; align-items: center; height: 18px; border-left: 1px solid #b3a294; }
.mem { width: 103px; gap: 8px; padding-left: 9px; }
.counts { gap: 9px; padding-left: 27px; }
.counts span { display: flex; gap: 6px; }
.msg { width: 342px; height: 17px; margin-left: auto; }

.dialog { position: absolute; right: 9px; bottom: 38px; width: 302px; border: 1px solid #a5a593; background: #eeece7; }
.dialog h2 { height: 25px; font: bold 12px/26px "DejaVu Sans", Verdana, sans-serif; text-align: center; background: linear-gradient(#cfe1e0 0 40%, #c3d9d9 42%, #b3d1d1); border-bottom: 1px solid #70a5a0; }
.dbody { padding: 4px; }
.filter { width: 100%; border-color: #6f96d4; box-shadow: 0 0 0 1px #a9c3f0; }
.listbox { display: flex; height: 152px; margin-top: 5px; border: 1px solid #a5a593; background: #fefdf9; }
.listbox select { flex: 1; height: 100%; padding: 4px 1px 2px; border: 0; border-radius: 0; background: none; font: inherit; overflow: hidden; outline: 0; }
.listbox option { min-height: 16px; height: 16px; padding: 0 2px; line-height: 16px; color: #000; }
.scroll { width: 17px; display: flex; flex-direction: column; align-items: center; padding: 7px 2px; background: #f1f1f1; }
.scroll i { width: 13px; height: 57px; margin: 6px 0 auto; background: #bbb; border: 1px solid #a5a5a5; }
.dbtns { display: flex; justify-content: center; gap: 4px; margin-top: 3px; }

.taskbar { display: flex; align-items: center; gap: 3px; height: 30px; background: #636363; color: #fff; font: 12px/16px "Open Sans", "Noto Sans", sans-serif; }
.taskbar button { width: 43px; height: 30px; display: grid; place-items: center; }
.taskbar .start { width: 39px; }
.taskbar .front { background: #9c9c9c; border: 1px solid #eee; }
.taskbar .open { background: #7c7c7c; border: 1px solid #a9a9a9; }
.tray { display: flex; align-items: center; margin-left: auto; gap: 9px; padding: 2px 32px 0 0; }
.tray > svg:first-child { margin-right: 4px; }
.tray span { margin: 0 25px 0 8px; }
```
